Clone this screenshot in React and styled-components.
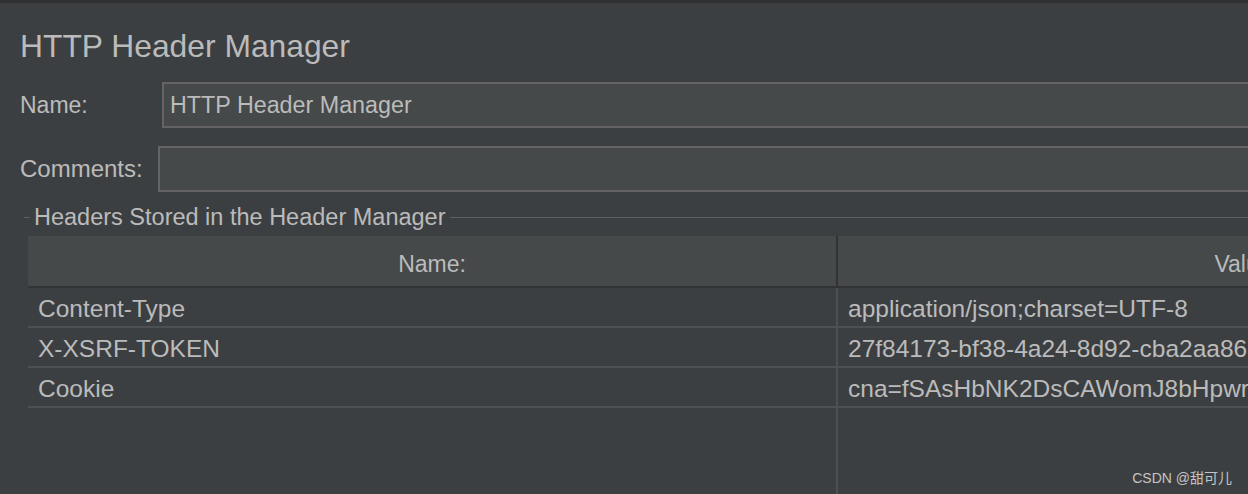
import React from "react";
import styled, { createGlobalStyle } from "styled-components";

const Global = createGlobalStyle`
  html, body { margin: 0; padding: 0; background: #3c3f41; overflow: hidden; }
  * { box-sizing: border-box; }
`;

const FONT = `"Liberation Sans", Arial, "Noto Sans CJK SC", sans-serif`;

const Viewport = styled.div`
  position: relative;
  width: 100vw;
  height: 100vh;
  overflow: hidden;
  background: #3c3f41;
  font-family: ${FONT};
  color: #bbbbbb;
`;

const TopStrip = styled.div`
  height: 3px;
  background: #2e3032;
`;

const Panel = styled.div`
  width: 1700px;
  padding-left: 20px;
  display: flex;
  flex-direction: column;
`;

const Title = styled.h1`
  margin: 25px 0 0 0;
  font-size: 31.8px;
  line-height: 36px;
  font-weight: 400;
  color: #bbbbbb;
  white-space: nowrap;
`;

const FieldRow = styled.div`
  display: flex;
  align-items: center;
  margin-top: ${(p) => p.$gap}px;
`;

const Label = styled.label`
  flex: 0 0 ${(p) => p.$width}px;
  font-size: ${(p) => p.$size || 23}px;
  white-space: nowrap;
`;

const TextInput = styled.input`
  flex: 1;
  height: 46px;
  border: 2px solid #646464;
  background: #45494a;
  color: #bbbbbb;
  font-family: ${FONT};
  font-size: 23.3px;
  padding: 0 6px;
  outline: none;
`;

const Legend = styled.div`
  display: flex;
  align-items: center;
  margin: 12px 0 0 4px;
  gap: 4px;
`;

const LegendDash = styled.span`
  width: 6px;
  height: 1px;
  background: #5d6062;
`;

const LegendLine = styled.span`
  flex: 1;
  height: 1px;
  background: #5d6062;
`;

const LegendText = styled.span`
  font-size: 23.5px;
  line-height: 26px;
  white-space: nowrap;
`;

const Table = styled.div`
  margin: 6px 0 0 8px;
  display: grid;
  grid-template-columns: 810px 810px;
`;

const HeadCell = styled.div`
  height: 52px;
  background: #45494a;
  border-bottom: 2px solid #313335;
  border-right: ${(p) => (p.$divider ? "2px solid #313335" : "none")};
  text-align: center;
  font-size: 23px;
  padding-top: 7px;
  line-height: 43px;
  white-space: nowrap;
`;

const Cell = styled.div`
  height: 40px;
  border-bottom: 2px solid #4e5153;
  border-right: ${(p) => (p.$divider ? "2px solid #4e5153" : "none")};
  padding: 3px 0 0 10px;
  font-size: 24.5px;
  line-height: 35px;
  white-space: nowrap;
  overflow: hidden;
`;

const FillCell = styled.div`
  height: 120px;
  border-right: ${(p) => (p.$divider ? "2px solid #4e5153" : "none")};
`;

const Watermark = styled.div`
  position: absolute;
  right: 16px;
  bottom: 8px;
  font-family: "Liberation Sans", Arial, "Noto Sans CJK SC", sans-serif;
  font-size: 14px;
  line-height: 16px;
  color: #c4c4c4;
  white-space: nowrap;
`;

const rows = [
  ["Content-Type", "application/json;charset=UTF-8"],
  ["X-XSRF-TOKEN", "27f84173-bf38-4a24-8d92-cba2aa86c1f0"],
  ["Cookie", "cna=fSAsHbNK2DsCAWomJ8bHpwrX; isg=BGRk"],
];

export default function App() {
  return (
    <Viewport>
      <Global />
      <TopStrip />
      <Panel>
        <Title>HTTP Header Manager</Title>
        <FieldRow $gap={18}>
          <Label $width={142}>Name:</Label>
          <TextInput defaultValue="HTTP Header Manager" />
        </FieldRow>
        <FieldRow $gap={18}>
          <Label $width={138} $size={24}>Comments:</Label>
          <TextInput defaultValue="" />
        </FieldRow>
        <Legend>
          <LegendDash />
          <LegendText>Headers Stored in the Header Manager</LegendText>
          <LegendLine />
        </Legend>
        <Table>
          <HeadCell $divider>Name:</HeadCell>
          <HeadCell>Value</HeadCell>
          {rows.map(([k, v]) => (
            <React.Fragment key={k}>
              <Cell $divider>{k}</Cell>
              <Cell>{v}</Cell>
            </React.Fragment>
          ))}
          <FillCell $divider />
          <FillCell />
        </Table>
      </Panel>
      <Watermark>CSDN @甜可儿</Watermark>
    </Viewport>
  );
}
